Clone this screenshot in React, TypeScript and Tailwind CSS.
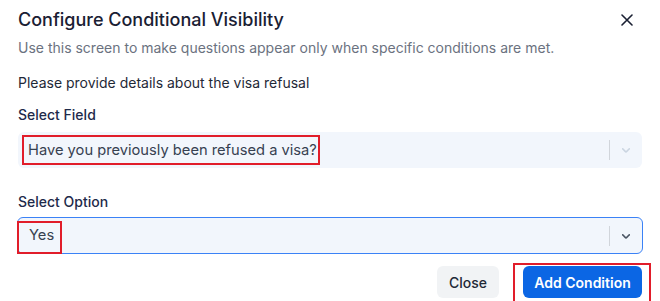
import React from "react";

function Chevron({ className }: { className?: string }) {
  return (
    <svg className={className} width="14" height="14" viewBox="0 0 20 20" fill="currentColor">
      <path d="M4.516 7.548c.436-.446 1.043-.481 1.576 0L10 11.295l3.908-3.747c.533-.481 1.141-.446 1.574 0 .436.445.408 1.197 0 1.615-.406.418-4.695 4.502-4.695 4.502a1.095 1.095 0 0 1-1.576 0S4.924 9.581 4.516 9.163c-.409-.418-.436-1.17 0-1.615z" />
    </svg>
  );
}

export default function App() {
  return (
    <div
      className="w-[660px] h-[301px] overflow-hidden bg-white px-[18px] pt-[6px]"
      style={{ fontFamily: "Inter, 'Noto Sans', sans-serif" }}
    >
      <div className="flex items-center justify-between">
        <h2 className="text-[18px] leading-[28px] font-medium text-[#1a2033]">
          Configure Conditional Visibility
        </h2>
        <button className="mr-[9px] text-[#1a2033]">
          <svg width="12" height="12" viewBox="0 0 12 12" stroke="currentColor" strokeWidth="1.6" strokeLinecap="round">
            <path d="M1 1L11 11M11 1L1 11" />
          </svg>
        </button>
      </div>
      <p className="mt-[4px] text-[14px] leading-[20px] text-[#6b7280]">
        Use this screen to make questions appear only when specific conditions are met.
      </p>
      <p className="mt-[15px] text-[14px] leading-[20px] text-[#1f2937]">
        Please provide details about the visa refusal
      </p>
      <div className="mt-[12px] text-[14px] leading-[20px] font-medium text-[#1e2a4a]">Select Field</div>
      <div className="relative mt-[7px] flex h-[36px] w-[624px] items-center rounded-[6px] bg-[#f2f6fc]">
        <span className="flex-1 pl-[10px] text-[14.7px] text-[#374151]">Have you previously been refused a visa?</span>
        <span className="h-[20px] w-px bg-[#d1d5db]" />
        <span className="flex w-[32px] justify-center text-[#cbd5e1]">
          <Chevron />
        </span>
        <span className="pointer-events-none absolute left-[4px] top-[3px] h-[30px] w-[298px] border-2 border-[#e11d2a]" />
      </div>
      <div className="mt-[24px] text-[14px] leading-[20px] font-medium text-[#1e2a4a]">Select Option</div>
      <div className="relative mt-[5px] flex h-[37px] w-[626px] -ml-[1px] items-center rounded-[6px] border border-[#3b82f6] bg-[#f2f6fc]">
        <span className="flex-1 pl-[11px] text-[14.7px] text-[#374151]">Yes</span>
        <span className="h-[20px] w-px bg-[#d1d5db]" />
        <span className="flex w-[32px] justify-center text-[#4b5563]">
          <Chevron />
        </span>
        <span className="pointer-events-none absolute -left-[1px] top-[3px] h-[33px] w-[45px] border-2 border-[#e11d2a]" />
      </div>
      <div className="mt-[12px] flex justify-end gap-[24px]">
        <button className="h-[32px] w-[62px] rounded-[6px] bg-[#f1f3f5] text-[14px] font-medium text-[#1f2937]">
          Close
        </button>
        <div className="relative">
          <button className="h-[32px] w-[119px] rounded-[6px] bg-[#0b66e4] text-[14px] font-semibold text-white">
            Add Condition
          </button>
          <span className="pointer-events-none absolute -left-[10px] -top-[3px] h-[40px] w-[138px] border-2 border-[#e11d2a]" />
        </div>
      </div>
    </div>
  );
}
